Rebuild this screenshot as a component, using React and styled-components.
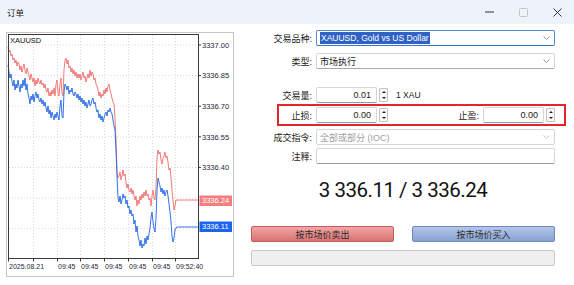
import styled, {createGlobalStyle} from 'styled-components';

const GlobalStyle = createGlobalStyle`
    body {
        margin: 0;
        background: #ffffff;
        font-family: "Liberation Sans", "Noto Sans CJK SC", sans-serif;
    }
`;

const Window = styled.div`
    width: 574px;
    height: 285px;
    background: #ffffff;
    overflow: hidden;
    display: flex;
    flex-direction: column;
`;

const TitleBar = styled.div`
    height: 24px;
    background: #eef3f9;
    display: flex;
    align-items: center;
    justify-content: space-between;
`;

const Title = styled.div`
    padding-left: 7px;
    font-size: 8.5px;
    color: #1a1a1a;
`;

const Controls = styled.div`
    display: flex;
    height: 100%;
`;

const ControlButton = styled.div`
    width: 34px;
    height: 100%;
    display: flex;
    align-items: center;
    justify-content: center;
`;

const Body = styled.div`
    display: flex;
    align-items: flex-start;
    padding-left: 6px;
`;

const ChartPanel = styled.div`
    margin-top: 8px;
    width: 228px;
    height: 245px;
    flex: none;
    box-sizing: border-box;
    border: 1px solid #c6c6c6;
    background: #ffffff;
    svg {
        display: block;
    }
`;

const Form = styled.div`
    margin-left: 6px;
    padding-top: 6px;
    width: 326px;
    flex: none;
    display: flex;
    flex-direction: column;
`;

const Row = styled.div`
    display: flex;
    align-items: center;
    height: 16px;
    margin-top: ${(p) => p.$gap || 0}px;
`;

const Label = styled.div`
    width: ${(p) => p.$width || 76}px;
    flex: ${(p) => (p.$grow ? 1 : 'none')};
    box-sizing: border-box;
    padding-right: 4px;
    text-align: right;
    font-size: 9px;
    color: #222222;
    white-space: nowrap;
`;

const SelectBox = styled.div`
    width: 239px;
    height: 16px;
    box-sizing: border-box;
    border: 1px solid ${(p) => (p.$focused ? '#5a8ad2' : '#d6d6d6')};
    border-bottom-color: ${(p) => (p.$focused ? '#3a72c8' : p.$disabled ? '#d6d6d6' : '#a8a8a8')};
    border-radius: 2px;
    background: #ffffff;
    display: flex;
    align-items: center;
    justify-content: space-between;
    padding: 0 4px 0 3px;
    font-size: 9px;
    color: ${(p) => (p.$disabled ? '#a0a0a0' : '#1a1a1a')};
`;

const Highlight = styled.span`
    background: #2f62c4;
    color: #ffffff;
    padding: 1px 1px;
    font-size: 8.5px;
`;

const TextInput = styled.div`
    width: ${(p) => p.$width || 239}px;
    height: 16px;
    box-sizing: border-box;
    border: 1px solid #d6d6d6;
    border-bottom-color: #9a9a9a;
    border-radius: 2px;
    background: #ffffff;
    text-align: right;
    padding-right: 5px;
    font-size: 9px;
    line-height: 14px;
    color: #1a1a1a;
`;

const Spinner = styled.div`
    margin-left: 2px;
    width: 9px;
    height: 14px;
    box-sizing: border-box;
    border: 1px solid #c4c4c4;
    border-radius: 1px;
    display: flex;
    flex-direction: column;
    align-items: center;
    justify-content: space-around;
    background: #fafafa;
`;

const Arrow = styled.div`
    width: 0;
    height: 0;
    border-left: 2px solid transparent;
    border-right: 2px solid transparent;
    ${(p) => (p.$down ? 'border-top: 2px solid #222;' : 'border-bottom: 2px solid #222;')}
`;

const Unit = styled.div`
    margin-left: 8px;
    font-size: 8.5px;
    color: #222222;
`;

const StopBox = styled.div`
    margin-top: 1px;
    margin-left: 37px;
    width: 289px;
    height: 22px;
    box-sizing: border-box;
    border: 2px solid #e3262b;
    display: flex;
    align-items: center;
    padding-right: 9px;
`;

const Price = styled.div`
    margin-top: 16px;
    height: 20px;
    line-height: 20px;
    text-align: center;
    font-family: Roboto, "Liberation Sans", sans-serif;
    font-size: 20.5px;
    letter-spacing: -0.5px;
    color: #111111;
`;

const Buttons = styled.div`
    margin-top: 26px;
    margin-left: 11px;
    width: 304px;
    display: flex;
    justify-content: space-between;
`;

const TradeButton = styled.div`
    width: 143px;
    height: 16px;
    box-sizing: border-box;
    border: 1px solid ${(p) => (p.$sell ? '#c25c5c' : '#6f88bd')};
    border-radius: 2px;
    background: ${(p) =>
        p.$sell
            ? 'linear-gradient(#f3a5a5, #d97272)'
            : 'linear-gradient(#b3c5e8, #8aa2d2)'};
    display: flex;
    align-items: center;
    justify-content: center;
    font-size: 9px;
    color: #2a2a2a;
`;

const StatusBar = styled.div`
    margin-top: 8px;
    margin-left: 11px;
    width: 304px;
    height: 16px;
    box-sizing: border-box;
    border: 1px solid #c8c8c8;
    border-radius: 2px;
    background: #f0f0f0;
`;

const Chevron = ({color = '#8c8c8c'}) => (
    <svg width="7" height="4" viewBox="0 0 7 4">
        <path d="M0.5 0.5 L3.5 3.5 L6.5 0.5" fill="none" stroke={color} strokeWidth="0.9" />
    </svg>
);

const Spin = () => (
    <Spinner>
        <Arrow />
        <Arrow $down />
    </Spinner>
);

const redPts = [
    [8, 47], [9, 52], [10, 50], [11, 56], [12, 54], [13, 60], [14, 58], [15, 63], [16, 60], [17, 66], [18, 62], [19, 64],
    [20, 70], [21, 66], [22, 72], [23, 68], [24, 64], [25, 70], [26, 74], [27, 68], [28, 72], [29, 76], [30, 80], [31, 74],
    [32, 78], [33, 82], [34, 78], [35, 86], [36, 80], [37, 84], [38, 78], [39, 82], [40, 84], [41, 80], [42, 85], [43, 83],
    [44, 88], [45, 84], [46, 90], [47, 92], [48, 88], [49, 96], [50, 92], [51, 96], [52, 90], [53, 94], [54, 88], [55, 96],
    [56, 84], [57, 80], [58, 92], [59, 96], [60, 84], [61, 78], [62, 94], [63, 96], [64, 70], [65, 60], [66, 58], [67, 64],
    [68, 60], [69, 68], [70, 66], [71, 72], [72, 68], [73, 74], [74, 70], [75, 76], [76, 72], [77, 78], [78, 74], [79, 78],
    [80, 74], [81, 80], [82, 76], [83, 72], [84, 78], [85, 76], [86, 82], [87, 78], [88, 74], [89, 78], [90, 70], [91, 76],
    [92, 72], [93, 74], [94, 80], [95, 78], [96, 84], [97, 86], [98, 90], [99, 96], [100, 92], [101, 98], [102, 94],
    [103, 96], [104, 90], [105, 94], [106, 88], [107, 92], [108, 86], [109, 84], [110, 90], [111, 94], [112, 98],
    [113, 102], [114, 104], [115, 118], [116, 140], [117, 172], [118, 178], [119, 176], [120, 172], [121, 180], [122, 176],
    [123, 170], [124, 176], [125, 174], [126, 182], [127, 188], [128, 184], [129, 190], [130, 192], [131, 188], [132, 194],
    [133, 190], [134, 196], [135, 200], [136, 196], [137, 206], [138, 200], [139, 204], [140, 196], [141, 200], [142, 194],
    [143, 198], [144, 192], [145, 196], [146, 190], [147, 196], [148, 194], [149, 200], [150, 198], [151, 206], [152, 196],
    [153, 190], [154, 198], [155, 200], [156, 188], [157, 158], [158, 150], [159, 154], [160, 152], [161, 160], [162, 164],
    [163, 158], [164, 156], [165, 152], [166, 158], [167, 156], [168, 162], [169, 170], [170, 168], [171, 178], [172, 190],
    [173, 200], [174, 210], [175, 206], [176, 200], [177, 200], [198, 200],
];

const bluePts = [
    [8, 65], [9, 72], [10, 78], [11, 74], [12, 82], [13, 86], [14, 80], [15, 90], [16, 84], [17, 88], [18, 80], [19, 86],
    [20, 92], [21, 84], [22, 88], [23, 80], [24, 86], [25, 78], [26, 90], [27, 84], [28, 94], [29, 98], [30, 104], [31, 96],
    [32, 100], [33, 94], [34, 102], [35, 96], [36, 92], [37, 98], [38, 94], [39, 100], [40, 102], [41, 98], [42, 104],
    [43, 100], [44, 106], [45, 102], [46, 108], [47, 112], [48, 106], [49, 114], [50, 110], [51, 118], [52, 112], [53, 116],
    [54, 120], [55, 114], [56, 118], [57, 112], [58, 116], [59, 120], [60, 106], [61, 100], [62, 116], [63, 118], [64, 92],
    [65, 84], [66, 86], [67, 90], [68, 86], [69, 94], [70, 90], [71, 92], [72, 88], [73, 94], [74, 96], [75, 92], [76, 94],
    [77, 98], [78, 94], [79, 100], [80, 96], [81, 102], [82, 98], [83, 104], [84, 100], [85, 106], [86, 102], [87, 108],
    [88, 104], [89, 100], [90, 106], [91, 104], [92, 100], [93, 98], [94, 104], [95, 102], [96, 108], [97, 112], [98, 110],
    [99, 118], [100, 114], [101, 120], [102, 116], [103, 122], [104, 118], [105, 114], [106, 112], [107, 116], [108, 110],
    [109, 112], [110, 108], [111, 112], [112, 114], [113, 120], [114, 126], [115, 130], [116, 150], [117, 176], [118, 198],
    [119, 202], [120, 196], [121, 204], [122, 200], [123, 194], [124, 198], [125, 196], [126, 204], [127, 200], [128, 208],
    [129, 206], [130, 214], [131, 210], [132, 216], [133, 214], [134, 224], [135, 220], [136, 232], [137, 226], [138, 236],
    [139, 240], [140, 246], [141, 240], [142, 248], [143, 244], [144, 246], [145, 238], [146, 244], [147, 236], [148, 240],
    [149, 234], [150, 228], [151, 218], [152, 212], [153, 222], [154, 228], [155, 232], [156, 218], [157, 190], [158, 178],
    [159, 182], [160, 186], [161, 192], [162, 188], [163, 194], [164, 190], [165, 196], [166, 192], [167, 190], [168, 196],
    [169, 204], [170, 212], [171, 222], [172, 236], [173, 242], [174, 238], [175, 230], [176, 228], [177, 227], [198, 227],
];

const toPoints = (pts) => pts.map(([x, y]) => `${x},${y}`).join(' ');

const priceLevels = [
    {y: 45, label: '3337.00'},
    {y: 75.6, label: '3336.85'},
    {y: 106.2, label: '3336.70'},
    {y: 136.8, label: '3336.55'},
    {y: 167.4, label: '3336.40'},
    {y: 198, label: null},
    {y: 228.6, label: null},
];

const timeTicks = [8, 33, 57, 80, 104, 128, 152, 175];
const timeLabels = ['2025.08.21', '', '09:45', '09:45', '09:45', '09:45', '09:45', '09:52:40'];

function PriceChart() {
    return (
        <svg width="226" height="243" viewBox="7 33 226 243" fontFamily='"Liberation Sans", sans-serif'>
            {priceLevels.map((l) => (
                <line key={l.y} x1="9" x2="198" y1={l.y} y2={l.y} stroke="#cfcfcf" strokeWidth="0.8" strokeDasharray="1 2" />
            ))}
            {timeTicks.slice(1).map((x) => (
                <line key={x} x1={x + 0.5} x2={x + 0.5} y1="35" y2="258" stroke="#cfcfcf" strokeWidth="0.8" strokeDasharray="1 2" />
            ))}
            <polyline points={toPoints(redPts)} fill="none" stroke="#f26b6b" strokeWidth="0.9" />
            <polyline points={toPoints(bluePts)} fill="none" stroke="#1f63e6" strokeWidth="0.9" />
            <rect x="8.5" y="34.5" width="190" height="224" fill="none" stroke="#3a3a3a" strokeWidth="1" />
            <text x="10" y="42.5" fontSize="7.5" fill="#111">XAUUSD</text>
            {priceLevels.filter((l) => l.label).map((l) => (
                <g key={l.label}>
                    <line x1="198.5" x2="201" y1={l.y} y2={l.y} stroke="#3a3a3a" />
                    <text x="202" y={l.y + 2.7} fontSize="7.5" fill="#1e2a3a">{l.label}</text>
                </g>
            ))}
            <rect x="199.5" y="195.5" width="32.5" height="10.5" fill="#f47f7f" />
            <text x="202" y="203.3" fontSize="7.5" fill="#ffffff">3336.24</text>
            <rect x="199.5" y="221.5" width="32.5" height="10.5" fill="#1a66ee" />
            <text x="202" y="229.3" fontSize="7.5" fill="#ffffff">3336.11</text>
            {timeTicks.map((x, i) => (
                <g key={i}>
                    <line x1={x + 0.5} x2={x + 0.5} y1="258.5" y2="261.5" stroke="#3a3a3a" />
                    {timeLabels[i] && (
                        <text x={x + 1} y="269" fontSize="7" fill="#1e2a3a">{timeLabels[i]}</text>
                    )}
                </g>
            ))}
        </svg>
    );
}

export default function App() {
    return (
        <>
            <GlobalStyle />
            <Window>
                <TitleBar>
                    <Title>订单</Title>
                    <Controls>
                        <ControlButton>
                            <svg width="9" height="2" viewBox="0 0 9 2">
                                <line x1="0" x2="9" y1="1" y2="1" stroke="#333" strokeWidth="1" />
                            </svg>
                        </ControlButton>
                        <ControlButton>
                            <svg width="9" height="9" viewBox="0 0 9 9">
                                <rect x="0.5" y="0.5" width="8" height="8" rx="1" fill="none" stroke="#c4c4c4" />
                            </svg>
                        </ControlButton>
                        <ControlButton>
                            <svg width="9" height="9" viewBox="0 0 9 9">
                                <path d="M0.5 0.5 L8.5 8.5 M8.5 0.5 L0.5 8.5" stroke="#333" strokeWidth="1" />
                            </svg>
                        </ControlButton>
                    </Controls>
                </TitleBar>
                <Body>
                    <ChartPanel>
                        <PriceChart />
                    </ChartPanel>
                    <Form>
                        <Row>
                            <Label>交易品种:</Label>
                            <SelectBox $focused>
                                <Highlight>XAUUSD, Gold vs US Dollar</Highlight>
                                <Chevron />
                            </SelectBox>
                        </Row>
                        <Row $gap={7}>
                            <Label>类型:</Label>
                            <SelectBox>
                                <span>市场执行</span>
                                <Chevron />
                            </SelectBox>
                        </Row>
                        <Row $gap={18}>
                            <Label>交易量:</Label>
                            <TextInput $width={61}>0.01</TextInput>
                            <Spin />
                            <Unit>1 XAU</Unit>
                        </Row>
                        <StopBox>
                            <Label $width={37}>止损:</Label>
                            <TextInput $width={61}>0.00</TextInput>
                            <Spin />
                            <Label $grow>止盈:</Label>
                            <TextInput $width={61}>0.00</TextInput>
                            <Spin />
                        </StopBox>
                        <Row $gap={3}>
                            <Label>成交指令:</Label>
                            <SelectBox $disabled>
                                <span>全部或部分 (IOC)</span>
                                <Chevron color="#c4c4c4" />
                            </SelectBox>
                        </Row>
                        <Row $gap={3}>
                            <Label>注释:</Label>
                            <TextInput />
                        </Row>
                        <Price>3 336.11 / 3 336.24</Price>
                        <Buttons>
                            <TradeButton $sell>按市场价卖出</TradeButton>
                            <TradeButton>按市场价买入</TradeButton>
                        </Buttons>
                        <StatusBar />
                    </Form>
                </Body>
            </Window>
        </>
    );
}
